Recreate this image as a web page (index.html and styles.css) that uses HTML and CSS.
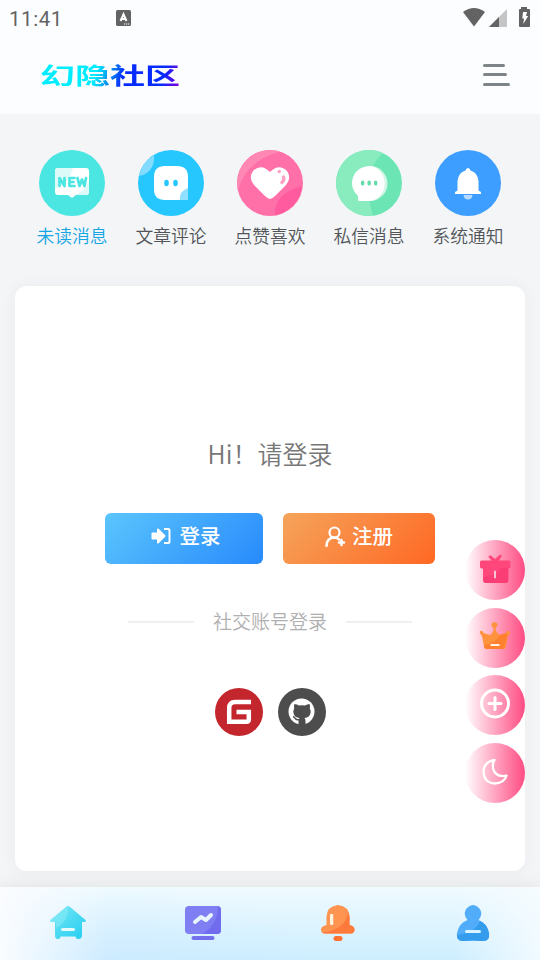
FILE: index.html
```html
<!DOCTYPE html>
<html lang="zh-CN">
<head>
<meta charset="utf-8">
<title>幻隐社区</title>
<link rel="stylesheet" href="styles.css">
</head>
<body>
<header class="top">
  <div class="status">
    <span class="clock">11:41</span>
    <svg class="keyboard" width="15" height="16" viewBox="0 0 15 16"><rect width="15" height="16" rx="1.5" fill="#636363"/><path d="M4.500 11 7.500 4.300 10.500 11M5.500 9h4" fill="none" stroke="#fff" stroke-width="2"/><path d="M8 14h1.300m.7 0h1.300m.7 0h1.300" stroke="#fff" stroke-width="1.200"/></svg>
    <svg class="signals" width="70" height="22" viewBox="0 0 70 22"><path d="M1 6Q12-2 23 6L12 20.500Z" fill="#636363"/><path d="M27 21 45 3v18Z" fill="#c5c5c5"/><path d="M27 21 37 11v10Z" fill="#636363"/><path d="M59 1h6v2h2q1 0 1 1v16q0 1-1 1H58q-1 0-1-1V4q0-1 1-1h1Z" fill="#636363"/><path d="M61 6h4l-1 4h2.200L61.300 18l.7-5.500h-1.700Z" fill="#fff"/></svg>
  </div>
  <div class="brandbar">
    <h1 class="logo">幻隐社区</h1>
    <svg class="menu" width="28" height="24" viewBox="0 0 28 24"><path d="M1.500 2.500h19M1.500 11.500h21M1.500 21.500h24" stroke="#7d8588" stroke-width="3" stroke-linecap="round"/></svg>
  </div>
</header>
<main>
  <nav class="channels">
    <a class="channel active">
      <svg viewBox="0 0 66 66"><circle cx="33" cy="33" r="33" fill="#4be6e1"/><path d="M19 18h28q3 0 3 3v21q0 3-3 3H37l-4 3-4-3H19q-3 0-3-3V21q0-3 3-3Z" fill="#fff"/><path d="M19 18h15q-4 15-18 21V21q0-3 3-3ZM50 31v11q0 3-3 3H36q10-4 14-14Z" fill="#dcfaf8"/><path d="M20.500 36v-8l5 8v-8M35.500 28h-5v8h5m-5-4h4M38.500 28l2 8 2.500-6.500 2.500 6.500 1.500-8" fill="none" stroke="#4be6e1" stroke-width="2.700" stroke-linecap="round" stroke-linejoin="round"/></svg>
      <span>未读消息</span>
    </a>
    <a class="channel">
      <svg viewBox="0 0 66 66"><circle cx="33" cy="33" r="33" fill="#26c6ff"/><path d="M1 26A33 33 0 0 1 16 5Q17 14 12 20 8 25 1 26Z" fill="#83dcff"/><path d="M27 16h12q11 0 11 11v22q0 1-1 1H27q-11 0-11-11V27q0-11 11-11Z" fill="#fff"/><path d="M42 50q-1-9 8-12v11q0 1-1 1Z" fill="#92e0ff"/><ellipse cx="28.500" cy="33" rx="2.300" ry="3.200" fill="#26c6ff"/><ellipse cx="37.500" cy="33" rx="2.300" ry="3.200" fill="#26c6ff"/></svg>
      <span>文章评论</span>
    </a>
    <a class="channel">
      <svg viewBox="0 0 66 66"><circle cx="33" cy="33" r="33" fill="#ff70a9"/><path d="M1 40A33 33 0 0 1 43 1.500Q9 11 1 40Z" fill="#ff87b4"/><path d="M38 65q-2-21 27-29A33 33 0 0 1 38 65Z" fill="#ff5b9e"/><path d="M33 49Q31 49 28 46L17 35Q11 28 16 21 24 13 33 22 42 13 50 21 55 28 49 35L38 46Q35 49 33 49Z" fill="#fff"/><circle cx="42.300" cy="21.500" r="1.700" fill="#ff9fc4"/><path d="M46.500 27q1.500 3-1.700 5.500" fill="none" stroke="#ff9fc4" stroke-width="3.200" stroke-linecap="round"/></svg>
      <span>点赞喜欢</span>
    </a>
    <a class="channel">
      <svg viewBox="0 0 66 66"><circle cx="33" cy="33" r="33" fill="#6ce5b5"/><path d="M37 65.700A33 33 0 1 1 47 3Q30 18 33 44q1 13 4 21.700Z" fill="#88ecbf"/><path d="M34 16a17.500 17.500 0 0 1 0 35H27Z" fill="#cff7e4"/><path d="M32.500 16a16 17.300 0 0 1 0 35H23q-1 0-1-1v-4A17 17 0 0 1 32.500 16Z" fill="#fff"/><g fill="#63dcaa"><rect x="25" y="30.500" width="3.300" height="5" rx="1.600"/><rect x="31.500" y="30.500" width="3.300" height="5" rx="1.600"/><rect x="38" y="30.500" width="3.300" height="5" rx="1.600"/></g></svg>
      <span>私信消息</span>
    </a>
    <a class="channel">
      <svg viewBox="0 0 66 66"><circle cx="33" cy="33" r="33" fill="#3d9eff"/><path d="M30.500 20.500q.5-2.500 2.500-2.500t2.500 2.500Q43 23 43.500 31v9.500l2.500 1.500v2H20v-2l2.500-1.500V31Q23 23 30.500 20.500Z" fill="#fff"/><path d="M28.500 45h9q-.500 4.500-4.500 4.500T28.500 45Z" fill="#b5d9ff"/></svg>
      <span>系统通知</span>
    </a>
  </nav>
  <section class="card">
    <h2>Hi！请登录</h2>
    <div class="actions">
      <button class="btn login"><svg width="20" height="18" viewBox="0 0 20 18"><path d="M1.500 6.500H7V2.500L13.500 9 7 15.500v-4H1.500Z" fill="#fff" stroke="#fff" stroke-width="2" stroke-linejoin="round"/><path d="M13 2h4q1.500 0 1.500 1.500v11Q18.500 16 17 16h-4" fill="none" stroke="#fff" stroke-width="2"/></svg><span>登录</span></button>
      <button class="btn register"><svg width="21" height="21" viewBox="0 0 21 21"><circle cx="9.500" cy="6.500" r="5" fill="none" stroke="#fff" stroke-width="2.200"/><path d="M1.500 20q0-8 8-8.500 3 0 4.500 2M16.500 14v5M14 16.500h5" fill="none" stroke="#fff" stroke-width="2.500" stroke-linecap="round"/></svg><span>注册</span></button>
    </div>
    <div class="divider"><span>社交账号登录</span></div>
    <div class="social">
      <svg viewBox="0 0 48 48"><circle cx="24" cy="24" r="24" fill="#c4262e"/><path d="M36 14H20q-5.800 0-5.800 6v13.700H31.500q2.300 0 2.300-2.200V24H21.500" fill="none" stroke="#fff" stroke-width="4.500"/></svg>
      <svg viewBox="0 0 48 48"><circle cx="24" cy="24" r="24" fill="#4d4d4d"/><circle cx="23.500" cy="23.500" r="13" fill="#fff"/><path d="M16.500 16q2.500 0 4.500 1.600 3-.6 6 0Q29 16 31.500 16q1 2 .3 4.500 1.200 2 .7 4.500-.7 4.500-6 5 1 1 1 3v4H20.500v-4q0-2 1-3-5.300-.5-6-5-.5-2.500.7-4.500-.7-2.500.3-4.500Z" fill="#4d4d4d"/><path d="M15 28.500q1.500.5 2.300 2 1 1.500 3.700 1.200" fill="none" stroke="#4d4d4d" stroke-width="1.500"/></svg>
    </div>
  </section>
</main>
<aside class="floaters">
  <a><svg viewBox="0 0 60 60"><path d="M26 15.500 30 19l4.500-4q2-1 2.500 1l-3 4.500h10q1.500 0 1.500 1.500v5q0 1.500-2 1.500V40q0 3-3 3H21q-3 0-3-3V28.500h-1q-2 0-2-1.500v-5q0-1.500 1.500-1.500h10L23.500 17q0-2 2.500-1.500Z" fill="#ff477b"/><path d="M18.500 37q13-1 17-9h7.500v12q0 3-3 3H21q-2 0-2.500-3Z" fill="#fa3d74"/><path d="M30 31.500v6" stroke="#ffc5d6" stroke-width="2" stroke-linecap="round"/></svg></a>
  <a><svg viewBox="0 0 60 60"><path d="M15.500 23q2-1 3 2l6.500 2q4-3 3.500-7-2-1-2-3 0-2.700 3-2.700t3 2.700q0 2-2 3 .5 5 4.500 7l6-2q1-3 3-2 2 1 .5 3-1.500 1-2 4l-1.500 8q0 3-3 3H22q-3 0-3-3l-1.500-8q-.500-3-2-4-1.500-2 0-3Z" fill="#ff923c"/><path d="M19 37q12-2 16-10l6-2 1.500 2-3 11q0 3-3 3H22q-3 0-3-4Z" fill="#ff8130"/><path d="M25.500 37h9" stroke="#fff2e5" stroke-width="2"/></svg></a>
  <a><svg viewBox="0 0 60 60"><circle cx="30" cy="28.500" r="13.500" fill="none" stroke="#fff" stroke-width="3"/><path d="M24 28.500h12M30 22.500v12" stroke="#fff" stroke-width="3" stroke-linecap="round"/></svg></a>
  <a><svg viewBox="0 0 60 60"><path d="M29.500 17q-11 2-11 12 .5 11 11.500 11.500 9.500-.5 11.500-8-8 2-12-3.500-3.500-6 0-12Z" fill="none" stroke="#fff" stroke-width="2.300" stroke-linejoin="round"/></svg></a>
</aside>
<footer class="tabs">
  <a><svg viewBox="0 0 36 40"><defs><linearGradient id="home" x2="1" y2="1"><stop stop-color="#76e8f5"/><stop offset="1" stop-color="#25cdf1"/></linearGradient></defs><path d="M16 3q2-2 4 0l15.500 13q1 2-1 2H32v13q0 4-3.500 4-3 0-3-2.500h-15q0 2.500-3 2.500Q5 35 5 31V18H1.500q-2 0-1-2Z" fill="url(#home)"/><path d="M18 2q2 15-12 22V18H1.500q-2 0-1-2L16 3Z" fill="#9bf0f8" opacity=".4"/><path d="M12.500 25.500h11" stroke="#e3fcff" stroke-width="3" stroke-linecap="round"/></svg></a>
  <a><svg viewBox="0 0 36 40"><rect y="2" width="36" height="28" rx="4" fill="#7f7ef3"/><path d="M33 2q3 1 3 4v20q0 4-4 4H17Q33 21 33 2Z" fill="#716ced"/><path d="m10 18 6-5 5 3 5-5" fill="none" stroke="#e8f5ff" stroke-width="4" stroke-linecap="round" stroke-linejoin="round"/><path d="M8.500 34h19" stroke="#746fec" stroke-width="4" stroke-linecap="round"/></svg></a>
  <a><svg viewBox="0 0 36 40"><path d="M6.500 21V13Q7 2 18 1q11 1 11.500 12v8q5 1 5 4.500 0 4-4 4H5q-4 0-4-4Q1 22 6.500 21Z" fill="#ff9350"/><path d="M28 8q1.500 2 1.500 5v8q5 1 5 4.500 0 4-4 4H5q-2 0-3-1Q26 26 28 8Z" fill="#ff793b"/><rect x="10" y="10" width="3.300" height="11" rx="1" fill="#fff2df"/><rect x="13.500" y="32" width="9" height="5" rx="2.500" fill="#ff7033"/></svg></a>
  <a><svg viewBox="0 0 36 40"><path d="M12.500 16Q7 9 12 4q6-6 12 0 5 5-.5 12Q32 19 34 29q1 8-6 8-10-1-20 0-7 0-6-8 2-10 10.500-13Z" fill="#51adfa"/><path d="M25 17q7 3 9 12 1 8-6 8-10-1-20 0-6 0-6-6Q20 29 25 17Z" fill="#339ced"/><path d="M11.500 27.500h13" stroke="#d9f4ff" stroke-width="3" stroke-linecap="round"/></svg></a>
</footer>
</body>
</html>
```
FILE: styles.css
```css
* { box-sizing: border-box; }
body {
  margin: 0;
  height: 960px;
  display: flex;
  flex-direction: column;
  overflow: hidden;
  background: #f4f5f7;
  color: #515559;
  font-family: "Noto Sans CJK SC", sans-serif;
  font-weight: 350;
}
svg { display: block; flex: none; }
.top { height: 114px; background: #fcfdff; }
.status { height: 36px; display: flex; align-items: center; padding: 0 8px 0 9px; }
.clock { width: 107px; font: 20.5px Roboto, sans-serif; letter-spacing: .55px; color: #636363; padding-top: 2px; }
.signals { margin-left: auto; margin-top: -2px; }
.brandbar { height: 78px; display: flex; align-items: center; justify-content: space-between; padding: 0 29px 0 40px; }
.logo {
  margin: -2px 0 0;
  font-size: 24px;
  line-height: 36px;
  font-weight: 700;
  transform: scale(1.46, .95);
  transform-origin: left;
  background: linear-gradient(100deg, #00edff 0 40%, #0984ee 51%, #062bff 59% 86%, #7500e0 97%);
  -webkit-background-clip: text;
  background-clip: text;
  color: transparent;
}
.channels { height: 172px; padding: 36px 22px 0; display: grid; grid-template-columns: repeat(5, 99px); justify-content: center; }
.channel { display: flex; flex-direction: column; align-items: center; font-size: 17.8px; line-height: 26px; }
.channel svg { width: 66px; height: 66px; margin-bottom: 6px; }
.active { color: #16a6e5; }
.card {
  height: 585px;
  margin: 0 15px;
  padding-top: 148px;
  border-radius: 12px;
  background: #fff;
  box-shadow: 0 0 16px rgba(60, 65, 80, .05);
  display: flex;
  flex-direction: column;
  align-items: center;
}
h2 { margin: 0; color: #777; font-size: 25px; line-height: 38px; font-weight: 350; }
.actions { display: flex; gap: 20px; margin-top: 41px; }
.btn {
  height: 51px;
  border: 0;
  border-radius: 6px;
  padding: 0 0 4px;
  display: flex;
  align-items: center;
  justify-content: center;
  color: #fff;
  font: 500 20.5px/30px "Noto Sans CJK SC", sans-serif;
}
.btn span { margin-top: -3px; }
.btn svg { margin-top: -1px; }
.login { width: 158px; gap: 9px; padding-left: 3px; background: linear-gradient(135deg, #5bc5fd, #278afb); }
.register { width: 152px; gap: 6px; background: linear-gradient(135deg, #f5a45b, #ff6824); }
.divider { display: flex; align-items: center; gap: 19px; margin-top: 43px; color: #b0b0b0; font-size: 19px; line-height: 30px; }
.divider span { margin-top: -1px; margin-bottom: 1px; }
.divider::before, .divider::after { content: ""; width: 66px; height: 2px; background: #f0f0f0; }
.social { display: flex; gap: 15px; margin-top: 51px; }
.social svg { width: 48px; height: 48px; }
.floaters { position: absolute; right: 15px; top: 540px; display: grid; gap: 7.6px; }
.floaters a { width: 60px; height: 60px; border-radius: 50%; background: linear-gradient(90deg, #fff, #ff4c83); }
.tabs {
  height: 73px;
  margin-top: auto;
  display: grid;
  grid-template-columns: repeat(4, 1fr);
  justify-items: center;
  padding-top: 17px;
  position: relative;
  box-shadow: 0 0 18px rgba(0, 0, 0, .09);
  background:
    linear-gradient(90deg, #fafcff, rgba(250, 252, 255, 0) 20% 84%, rgba(247, 252, 255, .85)),
    radial-gradient(ellipse 200px 70px at 110px 100%, rgba(205, 231, 255, .4), rgba(205, 231, 255, 0)),
    linear-gradient(#effaff, #cdeeff);
}
.tabs svg { width: 36px; height: 40px; }
```
